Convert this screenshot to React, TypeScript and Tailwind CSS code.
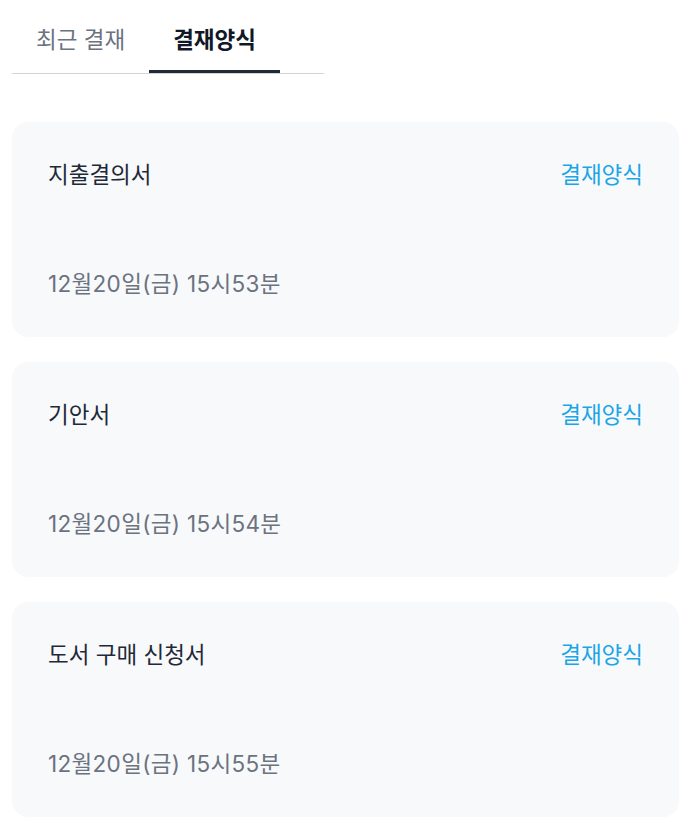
import React, { useState } from 'react';

const tabs = ['최근 결재', '결재양식'];

const forms = [
    { title: '지출결의서', date: '12월20일(금) 15시53분' },
    { title: '기안서', date: '12월20일(금) 15시54분' },
    { title: '도서 구매 신청서', date: '12월20일(금) 15시55분' },
];

// --- Card ---
const FormCard: React.FC<{ title: string; date: string }> = ({ title, date }) => (
    <div className="flex h-[215px] flex-col justify-between rounded-2xl bg-[#f8f9fb] px-9 py-9">
        <div className="flex items-center justify-between">
            <span className="text-[22.5px] leading-[34px] text-[#1f2937]">{title}</span>
            <span className="text-[22.5px] leading-[34px] text-[#1ba6e6]">결재양식</span>
        </div>
        <span className="text-[22.5px] leading-[34px] tracking-[0.33px] text-[#6b7280]">{date}</span>
    </div>
);

export default function App() {
    const [active, setActive] = useState(1);

    return (
        <div
            className="min-h-screen bg-white px-3"
            style={{ fontFamily: 'Inter, "Noto Sans CJK KR", sans-serif' }}
        >
            <div className="flex w-[312px] border-b border-[#d1d5db]">
                {tabs.map((tab, i) => (
                    <button
                        key={tab}
                        onClick={() => setActive(i)}
                        className={
                            i === active
                                ? 'border-b-[3px] border-[#1f2937] px-6 pt-[26px] pb-4 text-[22.5px] leading-7 font-bold text-[#111827]'
                                : 'border-b-[3px] border-transparent px-6 pt-[26px] pb-4 text-[22.5px] leading-7 text-[#6b7280]'
                        }
                    >
                        {tab}
                    </button>
                ))}
            </div>

            <div className="mt-12 flex flex-col gap-[25px] pb-3">
                {forms.map((f) => (
                    <FormCard key={f.title} title={f.title} date={f.date} />
                ))}
            </div>
        </div>
    );
}
